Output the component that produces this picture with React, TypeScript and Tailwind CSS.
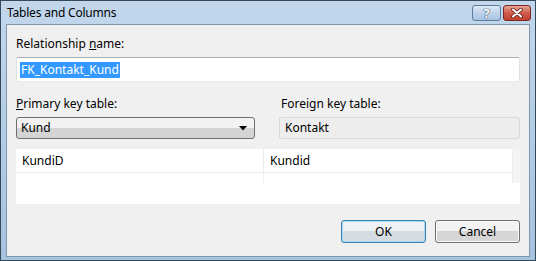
import React from "react";

const font = { fontFamily: '"Segoe UI", "Noto Sans", sans-serif' };

function ArrowDown() {
  return (
    <svg width="8" height="5" viewBox="0 0 8 5" className="block">
      <path d="M0 0 H8 L4 4.5 Z" fill="#000" />
    </svg>
  );
}

export default function App() {
  return (
    <div
      className="w-[536px] h-[261px] flex flex-col border border-[#34495c] bg-gradient-to-b from-[#c2d7ec] via-[#b3cde6] to-[#a5c3df] text-[12px] leading-[16px] text-black"
      style={font}
    >
      {/* Title bar */}
      <div className="h-[23px] flex items-start shrink-0">
        <div className="pl-[6px] pt-[4px] text-[12px] leading-[16px] tracking-[-0.2px] text-black flex-1">
          Tables and Columns
        </div>
        <div className="flex gap-[2px] pt-[4px] pr-[4px]">
          <div className="w-[29px] h-[16px] rounded-[3px] border border-[#5f7d9c] bg-gradient-to-b from-[#dce8f5] via-[#bfd3e9] to-[#a9c4e2] flex items-center justify-center">
            <span
              className="text-[13px] leading-[14px] font-bold text-white"
              style={{ textShadow: "0 0 1px #3b5570, 0 0 1px #3b5570, 0 0 1px #3b5570" }}
            >
              ?
            </span>
          </div>
          <div className="w-[28px] h-[16px] rounded-[3px] border border-[#7a2a22] bg-gradient-to-b from-[#e6a596] via-[#cf5a49] to-[#c2402f] flex items-center justify-center">
            <svg width="14" height="10" viewBox="0 0 14 10">
              <path d="M3 1.5 L11 8.5 M11 1.5 L3 8.5" stroke="#5a1a14" strokeWidth="3.6" strokeLinecap="round" />
              <path d="M3 1.5 L11 8.5 M11 1.5 L3 8.5" stroke="#fff" strokeWidth="2" strokeLinecap="round" />
            </svg>
          </div>
        </div>
      </div>

      {/* Client area */}
      <div className="flex-1 mx-[5px] mb-[3px] border border-[#7f97ad] bg-[#f0f0f0] pt-[11px] pl-[9px] pr-[9px] pb-[13px] flex flex-col">
        <div className="mb-[5px]">
          Relationship <span className="underline">n</span>ame:
        </div>
        <div className="h-[25px] border border-[#abadb3] border-l-[#dbdfe6] border-r-[#dbdfe6] border-b-[#e3e9ef] rounded-[2px] bg-white flex items-center pl-[3px]">
          <span className="bg-[#3399ff] text-white px-[1px] leading-[16px]">FK_Kontakt_Kund</span>
        </div>

        <div className="grid grid-cols-[239px_1fr] gap-x-[24px] mt-[14px]">
          <div className="mb-[5px]">
            <span className="underline">P</span>rimary key table:
          </div>
          <div className="mb-[5px] pl-[2px]">Foreign key table:</div>
          <div className="h-[22px] rounded-[3px] border border-[#707070] bg-gradient-to-b from-[#f2f2f2] from-50% to-[#d4d4d4] to-50% flex items-center justify-between pl-[4px] pr-[7px]">
            <span>Kund</span>
            <ArrowDown />
          </div>
          <div className="h-[22px] rounded-[2px] border border-[#d9d9d9] bg-[#ededed] flex items-center pl-[5px]">
            Kontakt
          </div>
        </div>

        <div className="mt-[10px] h-[55px] bg-white flex items-start">
          <div className="flex-1 flex flex-col">
            <div className="h-[24px] flex border-b border-[#ededed]">
              <div className="w-[248px] border-r border-[#ededed] pl-[6px] flex items-center">KundiD</div>
              <div className="flex-1 pl-[6px] flex items-center">Kundid</div>
            </div>
            <div className="h-[10px] flex">
              <div className="w-[248px] border-r border-[#ededed]"></div>
              <div className="flex-1"></div>
            </div>
          </div>
          <div className="w-[8px] h-[34px] bg-[#f4f4f4] border-l border-[#ededed]"></div>
        </div>

        <div className="mt-auto flex justify-end gap-[9px]">
          <button
            className="w-[85px] h-[23px] rounded-[3px] border border-[#3c7fb1] bg-gradient-to-b from-[#eef2f5] from-50% to-[#d5dde3] to-50% flex items-center justify-center text-[12px] leading-[16px]"
            style={{ ...font, boxShadow: "inset 0 0 0 1px #a9d8f3" }}
          >
            OK
          </button>
          <button
            className="w-[85px] h-[23px] rounded-[3px] border border-[#707070] bg-gradient-to-b from-[#f2f2f2] from-50% to-[#d6d6d6] to-50% flex items-center justify-center text-[12px] leading-[16px]"
            style={{ ...font, boxShadow: "inset 0 0 0 1px #fbfbfb" }}
          >
            Cancel
          </button>
        </div>
      </div>
    </div>
  );
}
